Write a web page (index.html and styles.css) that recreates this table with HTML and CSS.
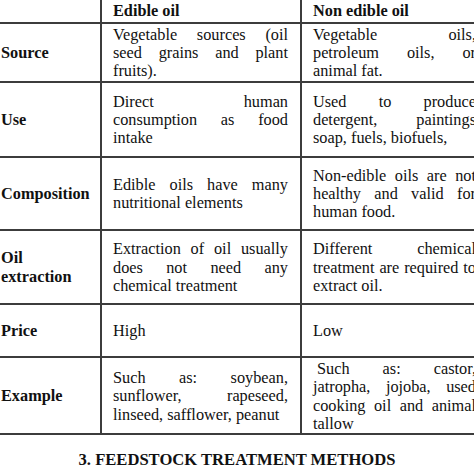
FILE: index.html
```html
<!DOCTYPE html>
<html>
<head>
<meta charset="utf-8">
<link rel="stylesheet" href="styles.css">
</head>
<body>
<div class="page">
<table class="cmp">
  <colgroup>
    <col class="c1">
    <col class="c2">
    <col class="c3">
  </colgroup>
  <tr class="r-head">
    <td class="lab"></td>
    <td class="hd">Edible oil</td>
    <td class="hd">Non edible oil</td>
  </tr>
  <tr class="r-source">
    <td class="lab">Source</td>
    <td>Vegetable sources (oil seed grains and plant fruits).</td>
    <td>Vegetable oils, petroleum oils, or animal fat.</td>
  </tr>
  <tr class="r-use">
    <td class="lab">Use</td>
    <td>Direct human consumption as food intake</td>
    <td>Used to produce detergent, paintings soap, fuels, biofuels,</td>
  </tr>
  <tr class="r-comp">
    <td class="lab">Composition</td>
    <td>Edible oils have many nutritional elements</td>
    <td>Non-edible oils are not healthy and valid for human food.</td>
  </tr>
  <tr class="r-ext">
    <td class="lab">Oil<br>extraction</td>
    <td>Extraction of oil usually does not need any chemical treatment</td>
    <td>Different chemical treatment are required to extract oil.</td>
  </tr>
  <tr class="r-price">
    <td class="lab">Price</td>
    <td>High</td>
    <td>Low</td>
  </tr>
  <tr class="r-ex">
    <td class="lab">Example</td>
    <td>Such as: soybean, sunflower, rapeseed, linseed, safflower, peanut</td>
    <td class="ind">Such as: castor, jatropha, jojoba, used cooking oil and animal tallow</td>
  </tr>
</table>
<h2 class="section">3. FEEDSTOCK TREATMENT METHODS</h2>
</div>
</body>
</html>
```

FILE: styles.css
```css
html, body {
  margin: 0;
  padding: 0;
  overflow: hidden;
  background: #ffffff;
}
.page {
  width: 474px;
  height: 469px;
  overflow: hidden;
}
.cmp {
  border-collapse: collapse;
  table-layout: fixed;
  width: 488px;
  font-family: "Liberation Serif", "Times New Roman", serif;
  font-size: 16.3px;
  line-height: 18.4px;
  color: #111111;
}
.c1 { width: 101px; }
.c2 { width: 200px; }
.c3 { width: 187px; }
.cmp td {
  border: 2px solid #3c3c3c;
  padding: 2px 12px 0 11px;
  vertical-align: middle;
  text-align: justify;
}
.cmp tr:first-child td { border-top: none; }
.cmp td:first-child { border-left: none; }
.cmp td:last-child { border-right: none; }
.cmp td.lab {
  font-weight: bold;
  padding-left: 1px;
  padding-right: 0;
  text-align: left;
}
.cmp td.hd {
  font-weight: bold;
  text-align: left;
}
.cmp td.ind { text-indent: 4px; }
.r-head td { height: 20px; vertical-align: top; }
.r-source td { height: 54.5px; padding-top: 1.5px; }
.r-use td { height: 71px; }
.r-comp td { height: 69px; }
.r-ext td { height: 70px; }
.r-price td { height: 49px; }
.r-ex td { height: 73px; }
.section {
  margin: 15px 0 0 0;
  font-family: "Liberation Serif", "Times New Roman", serif;
  font-size: 16.6px;
  line-height: 19px;
  font-weight: bold;
  text-align: center;
  color: #111111;
}
```
